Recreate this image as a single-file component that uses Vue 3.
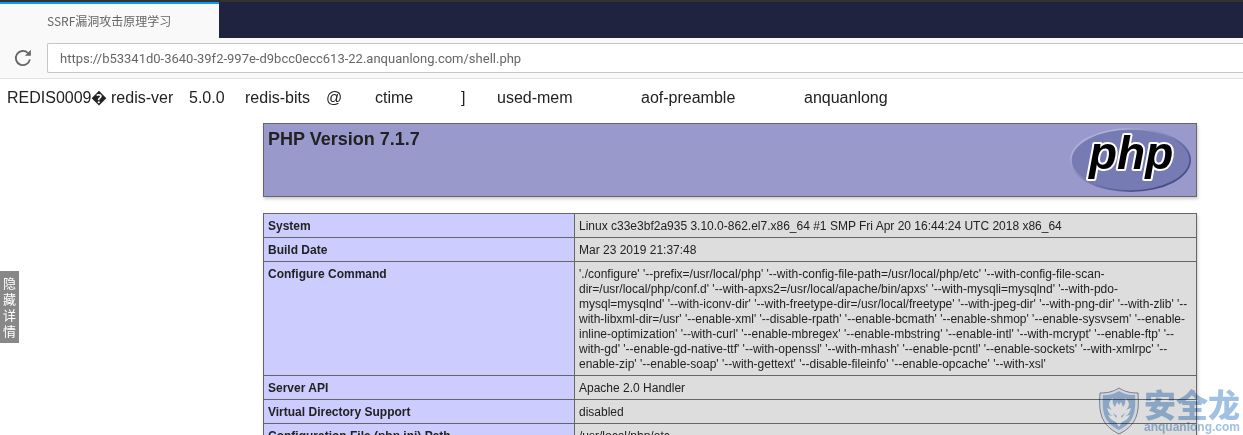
<script setup>
import { ref } from 'vue'

const url = ref('https://b53341d0-3640-39f2-997e-d9bcc0ecc613-22.anquanlong.com/shell.php')

const dump = ['REDIS0009\uFFFD', 'redis-ver', '5.0.0', 'redis-bits', '@', 'ctime', ']', 'used-mem', 'aof-preamble', 'anquanlong']

const configure = [
  "'./configure' '--prefix=/usr/local/php' '--with-config-file-path=/usr/local/php/etc' '--with-config-file-scan-",
  "dir=/usr/local/php/conf.d' '--with-apxs2=/usr/local/apache/bin/apxs' '--with-mysqli=mysqlnd' '--with-pdo-",
  "mysql=mysqlnd' '--with-iconv-dir' '--with-freetype-dir=/usr/local/freetype' '--with-jpeg-dir' '--with-png-dir' '--with-zlib' '--",
  "with-libxml-dir=/usr' '--enable-xml' '--disable-rpath' '--enable-bcmath' '--enable-shmop' '--enable-sysvsem' '--enable-",
  "inline-optimization' '--with-curl' '--enable-mbregex' '--enable-mbstring' '--enable-intl' '--with-mcrypt' '--enable-ftp' '--",
  "with-gd' '--enable-gd-native-ttf' '--with-openssl' '--with-mhash' '--enable-pcntl' '--enable-sockets' '--with-xmlrpc' '--",
  "enable-zip' '--enable-soap' '--with-gettext' '--disable-fileinfo' '--enable-opcache' '--with-xsl'",
].join('\n')

const rows = [
  ['System', 'Linux c33e3bf2a935 3.10.0-862.el7.x86_64 #1 SMP Fri Apr 20 16:44:24 UTC 2018 x86_64'],
  ['Build Date', 'Mar 23 2019 21:37:48'],
  ['Configure Command', configure],
  ['Server API', 'Apache 2.0 Handler'],
  ['Virtual Directory Support', 'disabled'],
  ['Configuration File (php.ini) Path', '/usr/local/php/etc'],
]
</script>

<template>
  <div class="browser">
    <header>
      <nav class="tabs">
        <button class="tab" type="button">SSRF漏洞攻击原理学习</button>
      </nav>
      <div class="toolbar">
        <button class="reload" type="button" aria-label="Reload">
          <svg width="18" height="18" viewBox="0 0 18 18" fill="none">
            <path d="M15.9 10.4A7.1 7.1 0 1 1 14 4.1" stroke="#666" stroke-width="1.8" />
            <path d="M16.9 0.8v6h-6z" fill="#666" />
          </svg>
        </button>
        <input v-model="url" class="address" type="text" aria-label="Address" spellcheck="false" />
      </div>
    </header>

    <main>
      <div class="dump">
        <span v-for="item in dump" :key="item">{{ item }}</span>
      </div>
      <div class="info">
        <div class="banner">
          <h1>PHP Version 7.1.7</h1>
          <svg class="logo" width="121" height="65" viewBox="0 0 121 65" role="img" aria-label="PHP logo">
            <defs>
              <linearGradient id="rim" x1="0" y1="0" x2="1" y2="1">
                <stop offset="0.2" stop-color="#aeb2d5" />
                <stop offset="0.5" stop-color="#777bb3" />
                <stop offset="0.8" stop-color="#484c89" />
              </linearGradient>
            </defs>
            <ellipse cx="60.5" cy="32" rx="60.5" ry="32" fill="url(#rim)" />
            <ellipse cx="60.5" cy="32" rx="58.8" ry="30.2" fill="#777bb3" />
            <text x="19" y="41">php</text>
          </svg>
        </div>
        <table>
          <tbody>
            <tr v-for="[name, value] in rows" :key="name">
              <th scope="row">{{ name }}</th>
              <td>{{ value }}</td>
            </tr>
          </tbody>
        </table>
      </div>
    </main>

    <button class="toggle" type="button">隐藏详情</button>

    <div class="watermark">
      <svg width="42" height="48" viewBox="0 0 42 48">
        <path d="M21 1C15 5 9 6 2 6C1 23 1 37 21 47C41 37 41 23 40 6C33 6 27 5 21 1Z" fill="#f4f6fa" stroke="#8490b0" stroke-width="1" />
        <path d="M21 4C15 8 10 8 5 8C4 24 5 35 21 43C37 35 38 24 37 8C32 8 27 8 21 4Z" fill="#a0c0e4" />
        <path d="M15 11C10 15 10 19 14 23L9 21C10 25 12 28 15 29L10 28C12 32 15 34 18 35L21 40L24 35C27 34 30 32 32 28L27 29C30 28 32 25 33 21L28 23C32 19 32 15 27 11C28 15 27 18 25 20L23 15L21 18L19 15L17 20C15 18 14 15 15 11Z" fill="#fff" />
        <path d="M15 26L19 29L18 31ZM27 26L23 29L24 31Z" fill="#a0c0e4" />
      </svg>
      <div class="brand">
        <strong>安全龙</strong>
        <span>anquanlong.com</span>
      </div>
    </div>
  </div>
</template>

<style>
body {
  margin: 0;
  background: #fff;
}
</style>

<style scoped>
.browser {
  position: relative;
  height: 100vh;
  overflow: hidden;
  color: #222;
  font-family: "Liberation Sans", "Noto Sans CJK SC", sans-serif;
}

button {
  margin: 0;
  padding: 0;
  border: 0;
  border-radius: 0;
  font-family: inherit;
}

.tabs {
  display: flex;
  height: 36px;
  border-top: 2px solid #333;
  background: #20233f;
}

.tab {
  width: 219px;
  padding: 0 0 2px 47px;
  border-top: 2px solid #0a9bf5;
  background: #f9f9fa;
  color: #666;
  font-family: "Noto Sans CJK SC", sans-serif;
  font-size: 12px;
  text-align: left;
}

.toolbar {
  display: flex;
  align-items: center;
  gap: 14px;
  box-sizing: border-box;
  height: 41px;
  padding-left: 14px;
  border-bottom: 1px solid #e2e2e3;
  background: #f9f9fa;
}

.reload {
  display: flex;
  width: 19px;
  background: none;
}

.address {
  flex: 1;
  min-width: 0;
  box-sizing: border-box;
  height: 30px;
  padding: 0 12px;
  border: 1px solid #c6c6c6;
  border-right: 0;
  border-radius: 2px 0 0 2px;
  background: #fff;
  color: #666;
  font-family: Roboto, "Noto Sans", sans-serif;
  font-size: 13px;
}

.dump {
  display: grid;
  grid-template-columns: 104px 78px 56px 81px 49px 86px 36px 144px 163px 1fr;
  padding: 9px 7px 16px;
  font-size: 16px;
  line-height: 19px;
  white-space: nowrap;
}

.info {
  margin: 0 46px 0 263px;
}

.banner {
  display: flex;
  justify-content: space-between;
  box-sizing: border-box;
  height: 74px;
  padding: 4px 5px 4px 4px;
  border: 1px solid #666;
  background: #9999cc;
  box-shadow: 1px 2px 3px #ccc;
}

h1 {
  margin: 0;
  font-size: 18px;
  line-height: 22px;
}

.logo text {
  font: italic bold 46px "Liberation Sans", sans-serif;
  fill: #000;
  stroke: #fff;
  stroke-width: 4px;
  stroke-linejoin: round;
  paint-order: stroke;
}

table {
  width: 100%;
  margin-top: 16px;
  border-collapse: collapse;
  box-shadow: 1px 2px 3px #ccc;
  font-size: 12px;
  line-height: 15px;
}

th,
td {
  padding: 5px 4px 3px;
  border: 1px solid #666;
  text-align: left;
  vertical-align: top;
}

th {
  width: 302px;
  background: #ccccff;
}

td {
  background: #dddddd;
  white-space: pre-line;
}

.toggle {
  position: absolute;
  top: 271px;
  left: 0;
  width: 19px;
  padding: 4px 3px;
  background: #888;
  color: #fff;
  font-family: "Noto Sans CJK SC", sans-serif;
  font-size: 13px;
  line-height: 16px;
  word-break: break-all;
}

.watermark {
  position: absolute;
  right: 0;
  bottom: 0;
  display: flex;
  gap: 4px;
  padding-right: 3px;
  mix-blend-mode: multiply;
}

.brand {
  display: flex;
  flex-direction: column;
  color: #a0c0e4;
  font-size: 12px;
  font-weight: bold;
  line-height: 16px;
}

.brand strong {
  font-family: "Noto Sans CJK SC", sans-serif;
  font-size: 32px;
  line-height: 32px;
}
</style>
